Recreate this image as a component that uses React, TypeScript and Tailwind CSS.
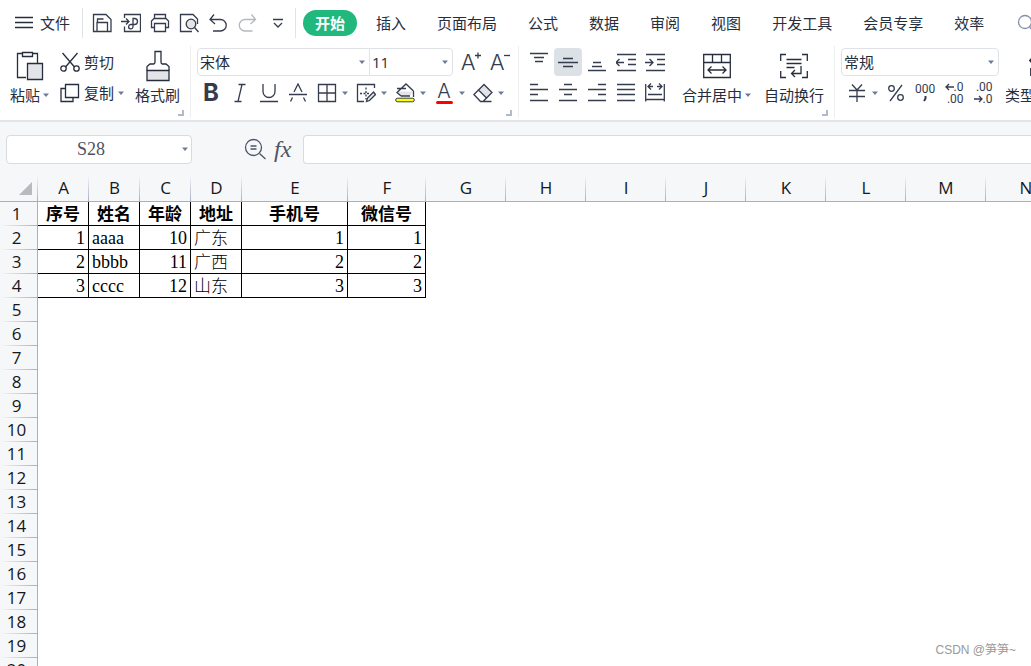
import { ReactNode } from 'react'
import clsx from 'clsx'

const tabs = ['开始', '插入', '页面布局', '公式', '数据', '审阅', '视图', '开发工具', '会员专享', '效率']

const columns = [
  { name: 'A', width: 51 },
  { name: 'B', width: 51 },
  { name: 'C', width: 51 },
  { name: 'D', width: 51 },
  { name: 'E', width: 106 },
  { name: 'F', width: 78 },
  { name: 'G', width: 80 },
  { name: 'H', width: 80 },
  { name: 'I', width: 80 },
  { name: 'J', width: 80 },
  { name: 'K', width: 80 },
  { name: 'L', width: 80 },
  { name: 'M', width: 80 },
  { name: 'N', width: 80 },
]

const data: (string | number)[][] = [
  ['序号', '姓名', '年龄', '地址', '手机号', '微信号'],
  [1, 'aaaa', 10, '广东', 1, 1],
  [2, 'bbbb', 11, '广西', 2, 2],
  [3, 'cccc', 12, '山东', 3, 3],
]

const rows = Array.from({ length: 20 }, (_, i) => i + 1)

function Icon({ w = 20, h = 20, className, children }: { w?: number; h?: number; className?: string; children: ReactNode }) {
  return (
    <svg
      width={w}
      height={h}
      viewBox={`0 0 ${w} ${h}`}
      fill="none"
      stroke="currentColor"
      strokeWidth="1.3"
      className={clsx('shrink-0', className)}
      aria-hidden="true"
    >
      {children}
    </svg>
  )
}

function Caret({ className }: { className?: string }) {
  return (
    <svg width="8" height="8" viewBox="0 0 8 8" className={clsx('shrink-0', className)} aria-hidden="true">
      <path d="M1 2.5h6L4 6z" fill="#6c7a99" />
    </svg>
  )
}

function Tool({ label, drop, active, children }: { label: string; drop?: boolean; active?: boolean; children: ReactNode }) {
  return (
    <button
      type="button"
      aria-label={label}
      className={clsx('flex h-7 items-center rounded-sm text-[#343c4e]', active && 'bg-[#dce1e6]', drop && 'pr-0.5')}
    >
      <span className="flex w-7 items-center justify-center">{children}</span>
      {drop && <Caret />}
    </button>
  )
}

function BigTool({ label, drop, icon }: { label: string; drop?: boolean; icon: ReactNode }) {
  return (
    <button type="button" className="flex shrink-0 flex-col items-center">
      <span className="flex h-9 items-center">{icon}</span>
      <span className="flex h-[22px] items-center gap-0.5 whitespace-nowrap">
        {label}
        {drop && <Caret />}
      </span>
    </button>
  )
}

function Group({ corner, className, children }: { corner?: boolean; className?: string; children: ReactNode }) {
  return (
    <section className={clsx('relative flex h-[72px] shrink-0 border-r border-[#eceef0] pt-0.5', className)}>
      {children}
      {corner && (
        <svg width="6" height="6" viewBox="0 0 6 6" className="absolute right-1.5 bottom-0.5" aria-hidden="true">
          <path d="M5 0v5H0" fill="none" stroke="#b0bacb" strokeWidth="2" />
        </svg>
      )}
    </section>
  )
}

function Select({ label, value, className }: { label: string; value: string; className?: string }) {
  return (
    <label className={clsx('relative flex h-7 items-center', className)}>
      <select aria-label={label} className="h-full w-full appearance-none border border-[#dfe2e6] bg-white pl-0.5 [border-radius:inherit]">
        <option>{value}</option>
      </select>
      <Caret className="pointer-events-none absolute right-1" />
    </label>
  )
}

function MenuBar() {
  return (
    <header className="flex h-[46px] shrink-0 items-center">
      <button type="button" className="ml-[15px] flex shrink-0 items-center gap-[7px]">
        <Icon w={18} h={14}>
          <path d="M0 1.500h18M0 6.500h18M0 11.500h18" />
        </Icon>
        文件
      </button>
      <div className="ml-3 h-[30px] w-px shrink-0 bg-[#e1e3e6]" />
      <div className="ml-[5px] flex shrink-0 gap-px">
        <Tool label="保存">
          <Icon>
            <path d="M1.500 1.500H14l5 5v12H1.500zM5 18.500V9.500h10.500v9M5.500 9.500V6h6" />
          </Icon>
        </Tool>
        <Tool label="输出为PDF">
          <Icon>
            <path d="M3.500 5V1.500h16v17h-16V13.500M0 8.500h8M5 5.500l3 3-3 3" />
            <path d="M12 12V5.500h1.500a3 3 0 0 1 0 6H10a2.200 2.200 0 1 0 2 2.500V11" />
          </Icon>
        </Tool>
        <Tool label="打印">
          <Icon>
            <path d="M4.500 5.500v-4h11v4M4.500 14.500H1.500V8L4 5.500h12L18.500 8v6.500h-3M4.500 10.500h11v8h-11z" />
          </Icon>
        </Tool>
        <Tool label="打印预览">
          <Icon>
            <path d="M13 18.500H1.500v-17H14l4.500 4.500v5" />
            <circle cx="12" cy="11" r="4.800" fill="#e2e4e8" />
            <path d="M15.500 14.500l4 4.500" />
          </Icon>
        </Tool>
        <Tool label="撤销">
          <Icon>
            <path d="M6 1.500L2 6.500l5 4.500M2 6.500h10.500a5.600 5.600 0 0 1 0 11.500H5" />
          </Icon>
        </Tool>
        <Tool label="恢复">
          <Icon className="text-[#b5b8be]">
            <path d="M14.500 1.500l4 5-5 4.500M18.500 6.500H8A5.600 5.600 0 0 0 8 18h7.500" />
          </Icon>
        </Tool>
        <Tool label="自定义快速访问工具栏">
          <Icon w={14} h={14} className="ml-1">
            <path d="M2 3.500h10M3 7l4 4 4-4" />
          </Icon>
        </Tool>
      </div>
      <div className="ml-[5px] h-[30px] w-px shrink-0 bg-[#e1e3e6]" />
      <nav className="ml-[7px] flex shrink-0 gap-[7px]">
        {tabs.map((tab, i) => (
          <button
            key={tab}
            type="button"
            className={clsx('h-[26px] rounded-full px-3 whitespace-nowrap', i === 0 && 'bg-[#20b87d] font-bold text-white')}
          >
            {tab}
          </button>
        ))}
      </nav>
      <button type="button" aria-label="查找" className="ml-[21px] shrink-0 text-[#8591ad]">
        <Icon>
          <circle cx="8" cy="9" r="6.500" />
          <path d="M12.500 14l5 5" />
        </Icon>
      </button>
    </header>
  )
}

function Ribbon() {
  return (
    <div className="flex h-[74px] shrink-0">
      <Group corner className="gap-2.5 px-2.5">
        <BigTool
          label="粘贴"
          drop
          icon={
            <Icon w={28} h={30}>
              <path d="M10 26.500H1.500v-24h20V12" />
              <path d="M6.500 1.500h10v4h-10z" fill="#fff" />
              <path d="M11.500 12.500h15v16h-15z" fill="#e2e4e8" />
            </Icon>
          }
        />
        <div className="flex flex-col gap-[3px]">
          <button type="button" className="flex h-7 items-center gap-1">
            <Icon>
              <path d="M2.500 1l12 14M17.500 1l-12 14" />
              <circle cx="3.500" cy="16.500" r="2.700" />
              <circle cx="16.500" cy="16.500" r="2.700" />
            </Icon>
            剪切
          </button>
          <button type="button" className="flex h-7 items-center gap-1">
            <Icon>
              <path d="M5 5.500H1v13h12v-4M5.500 1.500h13v13h-13z" />
            </Icon>
            复制
            <Caret className="-ml-px" />
          </button>
        </div>
        <BigTool
          label="格式刷"
          icon={
            <Icon w={26} h={32}>
              <path d="M2 20.500h22v10H2z" fill="#e2e4e8" />
              <path d="M2 20.500v-4l3-2.500h3.500Q10 14 10 12V1.500h6V12q0 2 1.500 2H21l3 2.500v4" />
            </Icon>
          }
        />
      </Group>

      <Group corner className="flex-col gap-[3px] pr-1 pl-1.5">
        <div className="flex">
          <Select label="字体" value="宋体" className="w-[173px] rounded-l-sm" />
          <Select label="字号" value="11" className="-ml-px w-[84px] rounded-r-sm font-['Open_Sans']" />
          <div className="ml-1 flex gap-px">
            <Tool label="增大字号">
              <span className="flex font-['Inter'] text-[22px] leading-6 font-light">
                A
                <Icon w={6} h={24}>
                  <path d="M0 5.500h6M3 2.500v6" />
                </Icon>
              </span>
            </Tool>
            <Tool label="减小字号">
              <span className="flex font-['Inter'] text-[22px] leading-6 font-light">
                A
                <Icon w={6} h={24}>
                  <path d="M0 5.500h6" />
                </Icon>
              </span>
            </Tool>
          </div>
        </div>
        <div className="flex gap-px">
          <Tool label="加粗">
            <span className="font-['Inter'] text-[24px] leading-7 font-bold">B</span>
          </Tool>
          <Tool label="倾斜">
            <Icon>
              <path d="M8.500 1.500h7M4.500 18.500h7M12 1.500l-4 17" />
            </Icon>
          </Tool>
          <Tool label="下划线">
            <Icon>
              <path d="M4 1v7.500a6 6 0 0 0 12 0V1M1 18.500h18" />
            </Icon>
          </Tool>
          <Tool label="删除线">
            <Icon>
              <path d="M1 11.500h18M2.500 18.500l2-4M6 9l4-8 4 8M15.500 14.500l2 4" />
            </Icon>
          </Tool>
          <Tool label="边框" drop>
            <Icon>
              <path d="M1.500 1.500h17v17h-17zM10 1.500v17M1.500 10h17" />
            </Icon>
          </Tool>
          <Tool label="绘图边框" drop>
            <Icon>
              <path d="M18.500 5V1.500h-17v17H8" />
              <path d="M10 4.500v12M4 10.500h10" strokeDasharray="2 1.500" />
              <path d="M10.500 18.500l1-3.500 6-6 2 2.500-6 6z" fill="#e2e4e8" />
            </Icon>
          </Tool>
          <Tool label="填充颜色" drop>
            <Icon>
              <path d="M3 8.500h14.500L15 13H6z" fill="#e2e4e8" stroke="none" />
              <path d="M6 13L2 9.500l9-8.500 7.500 7M2 5.500h9M18.500 8v6M6 13h9" />
              <rect x=".7" y="15.200" width="18.600" height="3.600" rx="1.800" fill="#ff0" strokeWidth="1" />
            </Icon>
          </Tool>
          <Tool label="字体颜色" drop>
            <span className="flex flex-col items-center font-['Inter'] text-[20px] leading-4 font-light">
              A
              <span className="mt-0.5 h-[3px] w-[17px] rounded-full bg-[#f00]" />
            </span>
          </Tool>
          <Tool label="清除" drop>
            <Icon>
              <path d="M5.500 7l5.500-5.500 8 8L13.500 15z" fill="#e2e4e8" />
              <path d="M5.500 7L.9 11.500l6.600 7h2.500l3.500-3.500M7 18.500h11.500" />
            </Icon>
          </Tool>
        </div>
      </Group>

      <Group corner className="gap-3 pr-2.5 pl-1.5">
        <div className="mr-px flex flex-col gap-[3px]">
          <div className="flex gap-px">
            <Tool label="顶端对齐">
              <Icon>
                <path d="M1 1.500h18M5 5.500h10M6 9.500h8" />
              </Icon>
            </Tool>
            <Tool label="垂直居中" active>
              <Icon>
                <path d="M5 6.500h10M0 10.500h20M5 14.500h10" />
              </Icon>
            </Tool>
            <Tool label="底端对齐">
              <Icon>
                <path d="M6 10.500h8M5 14.500h10M1 18.500h18" />
              </Icon>
            </Tool>
            <Tool label="减少缩进量">
              <Icon>
                <path d="M1 2.500h19M12 7.500h8M12 12.500h8M1 18.500h19M0 10.500h8M3.500 7L0 10.500 3.500 14" />
              </Icon>
            </Tool>
            <Tool label="增加缩进量">
              <Icon>
                <path d="M1 2.500h19M12 7.500h8M12 12.500h8M1 18.500h19M0 10.500h8M4.500 7L8 10.500 4.500 14" />
              </Icon>
            </Tool>
          </div>
          <div className="flex gap-px">
            <Tool label="左对齐">
              <Icon>
                <path d="M1 1.500h8M1 6.500h18M1 11.500h8M1 17.500h18" />
              </Icon>
            </Tool>
            <Tool label="水平居中">
              <Icon>
                <path d="M6 1.500h8M1 6.500h18M6 11.500h8M1 17.500h18" />
              </Icon>
            </Tool>
            <Tool label="右对齐">
              <Icon>
                <path d="M11 1.500h8M1 6.500h18M11 11.500h8M1 17.500h18" />
              </Icon>
            </Tool>
            <Tool label="两端对齐">
              <Icon>
                <path d="M1 1.500h18M1 6.500h18M1 11.500h18M1 17.500h18" />
              </Icon>
            </Tool>
            <Tool label="分散对齐">
              <Icon>
                <path d="M.7 1v17.500M19.300 1v17.500M3 11.500h14M1 16.500h18M3 3.500h5M12 3.500h5M6 .5l-3 3 3 3M14 .5l3 3-3 3" />
              </Icon>
            </Tool>
          </div>
        </div>
        <BigTool
          label="合并居中"
          drop
          icon={
            <Icon w={28} h={26}>
              <path d="M.7 1.500h26.600v23H.7zM.7 9.500h26.600M9.500 1.500v8M18.500 1.500v8M5 17h18M8.500 13.500L5 17l3.500 3.500M19.500 13.500L23 17l-3.500 3.500" />
            </Icon>
          }
        />
        <BigTool
          label="自动换行"
          icon={
            <Icon w={28} h={26}>
              <path d="M6 1.500H.7V8M22 1.500h5.300V8M6 24.500H.7V18M22 24.500h5.300V18M6.500 6.500h15M6.500 10.500h15M6.500 14.500h8M21 13v7.500H11.500M15 17l-3.500 3.500L15 24" />
            </Icon>
          }
        />
      </Group>

      <Group className="flex-col gap-[3px] border-r-0 pl-1.5">
        <Select label="数字格式" value="常规" className="w-[158px] rounded-sm" />
        <div className="flex gap-px pl-0.5">
          <Tool label="中文货币符号" drop>
            <Icon>
              <path d="M5 1.500l5 5.500 5-5.500M2 7.500h16M2 13.500h16M10 7v12" />
            </Icon>
          </Tool>
          <Tool label="百分比样式">
            <Icon w={18}>
              <circle cx="4.500" cy="5.500" r="2.800" />
              <circle cx="13.500" cy="14.500" r="2.800" />
              <path d="M15 2L3 18" />
            </Icon>
          </Tool>
          <Tool label="千位分隔样式">
            <span className="flex flex-col items-center font-['Roboto'] text-[12px] leading-3">
              000
              <Icon w={6} h={8}>
                <path d="M3.500 1v2.500L2 6" strokeWidth="2" />
              </Icon>
            </span>
          </Tool>
          <Tool label="增加小数位数">
            <span className="flex flex-col items-end font-['Roboto'] text-[12px] leading-3">
              <span className="flex">
                <Icon w={9} h={12}>
                  <path d="M1 6h8M4 3L1 6l3 3" />
                </Icon>
                .0
              </span>
              <span>.00</span>
            </span>
          </Tool>
          <Tool label="减少小数位数">
            <span className="flex flex-col items-end font-['Roboto'] text-[12px] leading-3">
              <span>.00</span>
              <span className="flex">
                <Icon w={9} h={12}>
                  <path d="M0 6h8M5 3l3 3-3 3" />
                </Icon>
                .0
              </span>
            </span>
          </Tool>
        </div>
      </Group>
      <Group className="border-r-0 pl-1.5">
        <BigTool
          label="类型转换"
          icon={
            <Icon w={12} h={24}>
              <path d="M5 2L1 6.500 5 11M1 6.500h10M2 14v8" strokeWidth="1.800" />
            </Icon>
          }
        />
      </Group>
    </div>
  )
}

function FormulaBar() {
  return (
    <div className="flex h-[55px] shrink-0 items-center border-t-2 border-[#e4e5e7] pt-px pl-1.5">
      <label className="relative flex w-[186px] shrink-0 items-center">
        <input
          aria-label="名称框"
          defaultValue="S28"
          className="h-[29px] w-full rounded-sm border border-[#d8dbdf] bg-white pr-4 text-center font-['Liberation_Serif'] text-[18px] text-[#4b5363]"
        />
        <Caret className="pointer-events-none absolute right-[3px]" />
      </label>
      <div className="ml-[52px] flex shrink-0 items-center gap-2 text-[#4b556b]">
        <button type="button" aria-label="查找单元格">
          <Icon w={22} h={22}>
            <circle cx="9.500" cy="9.500" r="8" />
            <path d="M15.500 15.500l6 5.500M6.500 8h6M6.500 11h6" />
          </Icon>
        </button>
        <button type="button" aria-label="插入函数" className="w-6 text-left font-['Liberation_Serif'] text-[24px] leading-7 italic">
          fx
        </button>
      </div>
      <input aria-label="编辑栏" className="ml-[5px] h-[29px] min-w-0 flex-1 rounded-l-sm border border-r-0 border-[#d8dbdf] bg-white px-2" />
    </div>
  )
}

function Sheet() {
  return (
    <main className="min-h-0 flex-1 overflow-hidden bg-white">
      <table className="w-px table-fixed border-separate border-spacing-0 font-['Open_Sans','Noto_Sans_CJK_SC',sans-serif] text-[17px] leading-[22px] text-[#15171c]">
        <colgroup>
          <col className="w-[38px]" />
          {columns.map((column) => (
            <col key={column.name} style={{ width: column.width }} />
          ))}
        </colgroup>
        <thead>
          <tr className="h-[27px] bg-[#f5f7f9]">
            <th className="border-b border-[#a8afc5] bg-[linear-gradient(to_bottom,transparent,#a8afc5)] bg-[length:1px_100%] bg-right bg-no-repeat p-0">
              <svg width="14" height="14" viewBox="0 0 14 14" className="ml-[18px]" aria-hidden="true">
                <path d="M14 1v13H1z" fill="#b9babd" />
              </svg>
            </th>
            {columns.map((column) => (
              <th
                key={column.name}
                scope="col"
                className="border-b border-[#a8afc5] bg-[linear-gradient(to_bottom,transparent,#a8afc5)] bg-[length:1px_100%] bg-right bg-no-repeat p-0 font-normal"
              >
                {column.name}
              </th>
            ))}
          </tr>
        </thead>
        <tbody>
          {rows.map((row) => (
            <tr key={row} className="h-6">
              <th
                scope="row"
                className="border-r border-[#a8afc5] bg-[#f5f7f9] bg-[linear-gradient(to_right,transparent,#a8afc5)] bg-[length:100%_1px] bg-bottom bg-no-repeat p-0 pr-1 font-normal"
              >
                {row}
              </th>
              {columns.map((column, i) => {
                const value = data[row - 1]?.[i]
                if (value === undefined) return <td key={column.name} className="p-0" />
                return (
                  <td
                    key={column.name}
                    className={clsx(
                      'border-r border-b border-black p-0 text-black',
                      row === 1 && 'text-center font-bold',
                      row > 1 && typeof value === 'number' && "pt-px pr-[3px] text-right font-['Liberation_Serif'] text-[18px]",
                      row > 1 && i === 1 && "pt-px pl-[3px] font-['Liberation_Serif'] text-[18px]",
                      row > 1 && i === 3 && 'pl-[3px] font-light',
                    )}
                  >
                    {value}
                  </td>
                )
              })}
            </tr>
          ))}
        </tbody>
      </table>
    </main>
  )
}

export default function App() {
  return (
    <div className="relative flex h-screen flex-col overflow-hidden bg-[#f5f7f9] font-['Noto_Sans_CJK_SC',sans-serif] text-[15px] leading-[22px] text-[#262e3e]">
      <div className="shrink-0 overflow-hidden bg-white">
        <MenuBar />
        <Ribbon />
      </div>
      <FormulaBar />
      <Sheet />
      <span className="absolute right-[15px] bottom-[5px] font-['Liberation_Sans','Noto_Sans_CJK_SC',sans-serif] text-[12px] text-[#999]">
        CSDN @笋笋~
      </span>
    </div>
  )
}
